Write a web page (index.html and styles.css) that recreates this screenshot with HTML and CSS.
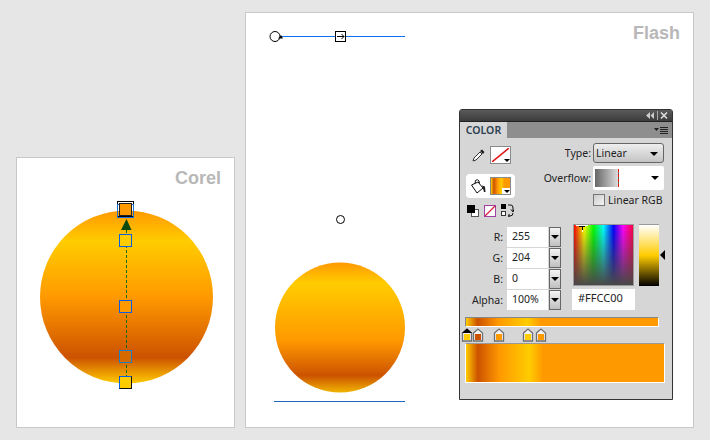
FILE: index.html
```html
<!DOCTYPE html>
<html lang="en">
<head>
  <meta charset="UTF-8" />
  <title>Corel and Flash gradients</title>
  <link rel="stylesheet" href="styles.css">
</head>
<body>

  <div class="card card-corel">
    <svg class="canvas" viewBox="17 158 217 269">
      <defs>
        <linearGradient id="corelFill" x1="0" y1="0" x2="0" y2="1">
          <stop offset="0" stop-color="#ff9900" />
          <stop offset="0.18" stop-color="#ffcc00" />
          <stop offset="0.5" stop-color="#ff9900" />
          <stop offset="0.85" stop-color="#cc5200" />
          <stop offset="1" stop-color="#ffcc00" />
        </linearGradient>
      </defs>
      <circle cx="126.5" cy="297" r="86.5" fill="url(#corelFill)" />
      <line x1="126.5" y1="230" x2="126.5" y2="377" stroke="#0a6a1a" stroke-dasharray="3 2" />
      <path d="M126.5 219 L131.5 230 L121 230 Z" fill="#0b4a0b" />
      <rect x="117.5" y="201.5" width="16" height="15" fill="none" stroke="#000" />
      <rect x="117.5" y="204.5" width="16" height="13" fill="none" stroke="#1e6fd0" />
      <rect x="119.5" y="203.5" width="12" height="12" fill="#ff9900" stroke="#222" />
      <rect x="119.5" y="234.5" width="12" height="12" fill="#ffcc00" stroke="#0a5fe0" />
      <rect x="119.5" y="300.5" width="12" height="12" fill="#ff9900" stroke="#0a5fe0" />
      <rect x="119.5" y="350.5" width="12" height="12" fill="#d66a00" stroke="#1e7fc0" />
      <rect x="119.5" y="376.5" width="12" height="12" fill="#ffcc00" stroke="#111" />
      <path d="M119.5 388.5 V376.5 H131.5" fill="none" stroke="#0a5fe0" />
    </svg>
    <div class="card-title">Corel</div>
  </div>

  <div class="card card-flash">
    <svg class="canvas" viewBox="246 13 447 414">
      <defs>
        <linearGradient id="flashFill" x1="0" y1="0" x2="0" y2="1">
          <stop offset="0" stop-color="#ff9900" />
          <stop offset="0.16" stop-color="#ffcc00" />
          <stop offset="0.6" stop-color="#ff9900" />
          <stop offset="0.87" stop-color="#cc5200" />
          <stop offset="1" stop-color="#f0b400" />
        </linearGradient>
      </defs>
      <line x1="281" y1="36.5" x2="405" y2="36.5" stroke="#0a6ff0" />
      <circle cx="275" cy="36.5" r="5" fill="#fff" stroke="#000" />
      <path d="M278 38.5 L283 38.5 L281 35 Z" fill="#000" />
      <rect x="335.5" y="31.5" width="10" height="10" fill="#fff" stroke="#000" />
      <path d="M337 36.5 H344 M341.5 34 L344 36.5 L341.5 39" fill="none" stroke="#000" />
      <circle cx="340.5" cy="219.5" r="4" fill="#fff" stroke="#000" />
      <circle cx="340" cy="327.5" r="65" fill="url(#flashFill)" />
      <line x1="274" y1="401.5" x2="405" y2="401.5" stroke="#1f66c0" />
    </svg>
    <div class="card-title">Flash</div>

    <div class="panel">
      <div class="panel-bar">
        <svg width="24" height="9" viewBox="0 0 24 9">
          <path d="M5 1 V8 L1 4.500 Z M9 1 V8 L5.500 4.500 Z" fill="#ccc" />
          <path d="M12.500 0 V9" stroke="#aaa" />
          <path d="M16 1.500 L22 7.500 M22 1.500 L16 7.500" stroke="#ddd" stroke-width="1.600" />
        </svg>
      </div>
      <div class="panel-tabs">
        <div class="tab">COLOR</div>
        <svg class="tab-menu" width="14" height="8" viewBox="0 0 14 8">
          <path d="M0 2 H5 L2.500 5 Z" fill="#222" />
          <path d="M6 1.500 H14 M6 3.500 H14 M6 5.500 H14 M6 7.500 H14" stroke="#222" />
        </svg>
      </div>

      <div class="top">
        <div class="tools">
          <div class="tool-row">
            <svg width="13" height="13" viewBox="0 0 13 13">
              <path d="M1 12 L2 9 L8 3 L10 5 L4 11 Z" fill="#fff" stroke="#333" />
              <path d="M8 2 L10 0.500 L12.500 3 L11 5 Z" fill="#222" />
            </svg>
            <div class="swatch">
              <svg width="17" height="14" viewBox="0 0 17 14">
                <line x1="0" y1="14" x2="17" y2="0" stroke="#e01010" stroke-width="1.500" />
              </svg>
            </div>
          </div>
          <div class="fill-box">
            <svg width="16" height="17" viewBox="0 0 16 17">
              <path d="M1.500 7 L8 4 L13 10 L7 15 Z" fill="#fff" stroke="#111" />
              <path d="M5 5.500 L5.500 2.500 Q7.500 0.500 9 3 L9.500 5.500" fill="none" stroke="#111" />
              <path d="M12 7.500 L15 8.500 L15.500 14 L14 14 Z" fill="#222" />
            </svg>
            <div class="swatch swatch-fill"></div>
          </div>
          <div class="tool-row small-icons">
            <svg width="12" height="13" viewBox="0 0 12 13">
              <rect x="4.500" y="5.500" width="7" height="7" fill="#fff" stroke="#555" />
              <rect x="0" y="1" width="8" height="8" fill="#000" />
            </svg>
            <svg width="12" height="13" viewBox="0 0 12 13">
              <rect x="0.500" y="1.500" width="11" height="11" fill="#fff" stroke="#a040a0" />
              <line x1="1" y1="12" x2="11" y2="2" stroke="#e02040" stroke-width="1.300" />
            </svg>
            <svg width="13" height="13" viewBox="0 0 13 13">
              <rect x="0" y="0" width="5" height="5" fill="#000" />
              <rect x="0.500" y="7.500" width="4" height="4" fill="#fff" stroke="#333" />
              <path d="M7 1 H10 Q12 1 12 4 V7 M10 5.500 L12 8 L13 5.500 M12 9 Q12 12 9 12 H7 M8 10 V13" fill="none" stroke="#111" />
            </svg>
          </div>
        </div>

        <div class="options">
          <div class="opt-label">Type:</div>
          <div class="select">Linear</div>
          <div class="opt-label">Overflow:</div>
          <div class="overflow"><div class="overflow-ramp"></div></div>
          <div></div>
          <div class="check-row"><div class="check"></div><span>Linear RGB</span></div>
        </div>
      </div>

      <div class="mix">
        <div class="fields">
          <div class="field"><div class="field-label">R:</div><div class="input">255</div><div class="spin"></div></div>
          <div class="field"><div class="field-label">G:</div><div class="input">204</div><div class="spin"></div></div>
          <div class="field"><div class="field-label">B:</div><div class="input">0</div><div class="spin"></div></div>
          <div class="field"><div class="field-label">Alpha:</div><div class="input">100%</div><div class="spin"></div></div>
        </div>
        <div class="pickers">
          <div class="picker-row">
            <div class="picker">
              <svg class="picker-mark" width="13" height="9" viewBox="0 0 13 9">
                <path d="M0 1.500 H12 M6.500 0 V8" stroke="#fff" />
                <path d="M3 2.500 H9 M6.500 2 V6" stroke="#000" />
              </svg>
            </div>
            <div class="ramp"></div>
            <div class="ramp-arrow"></div>
          </div>
          <div class="hex">#FFCC00</div>
        </div>
      </div>

      <div class="grad-bar"></div>
      <svg class="stops" width="90" height="14" viewBox="0 0 90 14">
        <g stroke="#6e6e6e" stroke-width="1.300">
          <path d="M2.500 5 L7 1 L11.500 5 V13 H2.500 Z" fill="#f4f4f4" />
          <path d="M13.500 5 L18 1 L22.500 5 V13 H13.500 Z" fill="#f4f4f4" />
          <path d="M34.500 5 L39 1 L43.500 5 V13 H34.500 Z" fill="#f4f4f4" />
          <path d="M63.500 5 L68 1 L72.500 5 V13 H63.500 Z" fill="#f4f4f4" />
          <path d="M76.500 5 L81 1 L85.500 5 V13 H76.500 Z" fill="#f4f4f4" />
        </g>
        <path d="M2 5 L7 0.500 L12 5 Z" fill="#000" />
        <rect x="4" y="6" width="6" height="6" fill="#ffcc00" />
        <rect x="15" y="6" width="6" height="6" fill="#cc5200" />
        <rect x="36" y="6" width="6" height="6" fill="#ff9900" />
        <rect x="65" y="6" width="6" height="6" fill="#ffcc00" />
        <rect x="78" y="6" width="6" height="6" fill="#ff9900" />
      </svg>
      <div class="grad-preview"></div>
    </div>
  </div>

</body>
</html>
```

FILE: styles.css
```css
body {
  margin: 0;
  width: 710px;
  height: 440px;
  padding: 12px 16px;
  box-sizing: border-box;
  background: #e6e6e6;
  display: flex;
  align-items: flex-end;
  gap: 10px;
  font-family: "Noto Sans", "DejaVu Sans", sans-serif;
  font-size: 10.5px;
  color: #222;
  overflow: hidden;
}
.card {
  position: relative;
  background: white;
  border: 1px solid #c8c8c8;
  box-sizing: border-box;
  flex: none;
}
.card-corel {
  width: 219px;
  height: 271px;
}
.card-flash {
  width: 449px;
  height: 416px;
}
.canvas {
  position: absolute;
  left: 0;
  top: 0;
  width: 100%;
  height: 100%;
}
.card-title {
  position: relative;
  text-align: right;
  font-family: "Liberation Sans", Arial, sans-serif;
  font-size: 18px;
  font-weight: 700;
  line-height: 20px;
  color: #b8b8b8;
  padding: 10px 13px 0 0;
}

/* color panel */
.panel {
  position: absolute;
  left: 213px;
  top: 96px;
  width: 214px;
  height: 291px;
  box-sizing: border-box;
  border: 1px solid #333;
  border-radius: 3px 3px 0 0;
  background: #d6d6d6;
}
.panel-bar {
  height: 11px;
  background: linear-gradient(#5a5a5a, #3c3c3c);
  border-bottom: 1px solid #222;
  display: flex;
  justify-content: flex-end;
  align-items: center;
  padding-right: 3px;
}
.panel-tabs {
  height: 16px;
  background: #8e8e8e;
  display: flex;
  justify-content: space-between;
  align-items: center;
}
.tab {
  width: 47px;
  height: 16px;
  background: #d6d6d6;
  font-size: 10.5px;
  font-weight: 600;
  line-height: 16px;
  text-align: center;
  color: #2c3e50;
}
.tab-menu {
  margin-right: 4px;
}
.top {
  height: 86px;
  box-sizing: border-box;
  padding: 5px 8px 0 6px;
  display: flex;
  justify-content: space-between;
}
.tools {
  width: 49px;
}
.tool-row {
  display: flex;
  align-items: center;
  justify-content: flex-end;
  gap: 5px;
  margin-top: 3px;
  padding-right: 4px;
}
.swatch {
  position: relative;
  width: 19px;
  height: 16px;
  border: 1px solid #8a8a8a;
  background: white;
  display: flex;
  align-items: center;
  justify-content: center;
}
.swatch::after {
  content: "";
  position: absolute;
  right: 0;
  bottom: 1px;
  border: 3px solid transparent;
  border-top-color: black;
  border-bottom-width: 0;
}
.swatch-fill {
  background: linear-gradient(to right, #ffcc00, #cc5200 15%, #ff9900 35%, #ffcc00 55%, #ff9900 70%);
}
.swatch-fill::before {
  content: "";
  position: absolute;
  right: 0;
  bottom: 0;
  width: 8px;
  height: 6px;
  background: white;
}
.fill-box {
  margin-top: 10px;
  height: 24px;
  background: white;
  border-radius: 4px;
  display: flex;
  align-items: center;
  justify-content: space-between;
  padding: 0 4px;
  box-sizing: border-box;
}
.small-icons {
  justify-content: flex-start;
  gap: 5px;
  margin-top: 6px;
  padding: 0 0 0 1px;
}
.options {
  display: grid;
  grid-template-columns: auto 71px;
  grid-template-rows: 20px 24px 14px;
  column-gap: 2px;
  row-gap: 3px;
  align-items: center;
}
.opt-label {
  text-align: right;
}
.select,
.overflow {
  position: relative;
  box-sizing: border-box;
}
.select {
  height: 20px;
  line-height: 18px;
  padding-left: 2px;
  border: 1px solid #666;
  border-radius: 3px;
  background: linear-gradient(#eee, #c4c4c4);
}
.select::after,
.overflow::after {
  content: "";
  position: absolute;
  right: 5px;
  top: 8px;
  border: 4px solid transparent;
  border-top-color: black;
  border-bottom-width: 0;
}
.overflow {
  height: 24px;
  background: white;
  border-radius: 2px;
  padding: 3px 0 0 2px;
}
.overflow::after {
  top: 10px;
}
.overflow-ramp {
  width: 23px;
  height: 18px;
  background: linear-gradient(to right, #666, #ddd);
  border-right: 1px dashed #f01000;
}
.check-row {
  display: flex;
  align-items: center;
  gap: 3px;
  white-space: nowrap;
}
.check {
  width: 10px;
  height: 10px;
  border: 1px solid #777;
  background: linear-gradient(135deg, #ccc, #f4f4f4);
}
.mix {
  display: flex;
  height: 86px;
}
.fields {
  width: 102px;
  padding-top: 3px;
  display: flex;
  flex-direction: column;
  gap: 1px;
}
.field {
  height: 20px;
  display: flex;
  align-items: center;
}
.field-label {
  width: 43px;
  text-align: right;
  margin-right: 4px;
}
.input {
  width: 41px;
  height: 20px;
  box-sizing: border-box;
  background: white;
  line-height: 19px;
  padding-left: 5px;
}
.spin {
  position: relative;
  width: 10px;
  height: 18px;
  margin-left: 1px;
  border: 1px solid #666;
  background: linear-gradient(#f4f4f4, #c0c0c0);
}
.spin::after {
  content: "";
  position: absolute;
  left: 1px;
  top: 7px;
  border: 4px solid transparent;
  border-top-color: black;
  border-bottom-width: 0;
}
.pickers {
  margin-left: 11px;
}
.picker-row {
  position: relative;
  display: flex;
  gap: 5px;
}
.picker {
  position: relative;
  width: 61px;
  height: 62px;
  box-sizing: border-box;
  border: 1px solid #999;
  background:
    linear-gradient(to bottom, rgba(68,68,68,0), #484848),
    linear-gradient(to right, #ff0000, #ffff00 17%, #00ff00 33%, #00ffff 50%, #0000ff 67%, #ff00ff 83%, #ff0040);
  overflow: hidden;
}
.picker-mark {
  position: absolute;
  left: 2px;
  top: -1px;
}
.ramp {
  width: 20px;
  height: 62px;
  box-sizing: border-box;
  border-top: 1px solid #999;
  background: linear-gradient(white, #ffcc00 50%, #000);
}
.ramp-arrow {
  position: absolute;
  left: 87px;
  top: 26px;
  border: 5px solid transparent;
  border-right-color: black;
  border-left-width: 0;
}
.hex {
  width: 63px;
  height: 21px;
  box-sizing: border-box;
  margin: 3px 0 0 -1px;
  padding-left: 6px;
  line-height: 18px;
  font-size: 11px;
  background: white;
}
.grad-bar {
  margin: 7px 0 0 5px;
  width: 194px;
  height: 10px;
  border-top: 1px solid #888;
  border-left: 1px solid #888;
  border-right: 1px solid white;
  border-bottom: 1px solid white;
  box-sizing: border-box;
  background: linear-gradient(to right, #ffcc00, #cc5200 6%, #ff9900 17%, #ffcc00 32%, #ff9900 39%);
}
.stops {
  display: block;
  margin: 1px 0 0 0;
}
.grad-preview {
  margin: 1px 0 0 5px;
  width: 200px;
  height: 40px;
  box-sizing: border-box;
  border-top: 1px solid #999;
  border-bottom: 1px solid white;
  border-left: 1px solid white;
  border-right: 1px solid white;
  background: linear-gradient(to right, #ffcc00, #cc5200 6%, #ff9900 17%, #ffcc00 32%, #ff9900 39%);
}
```
